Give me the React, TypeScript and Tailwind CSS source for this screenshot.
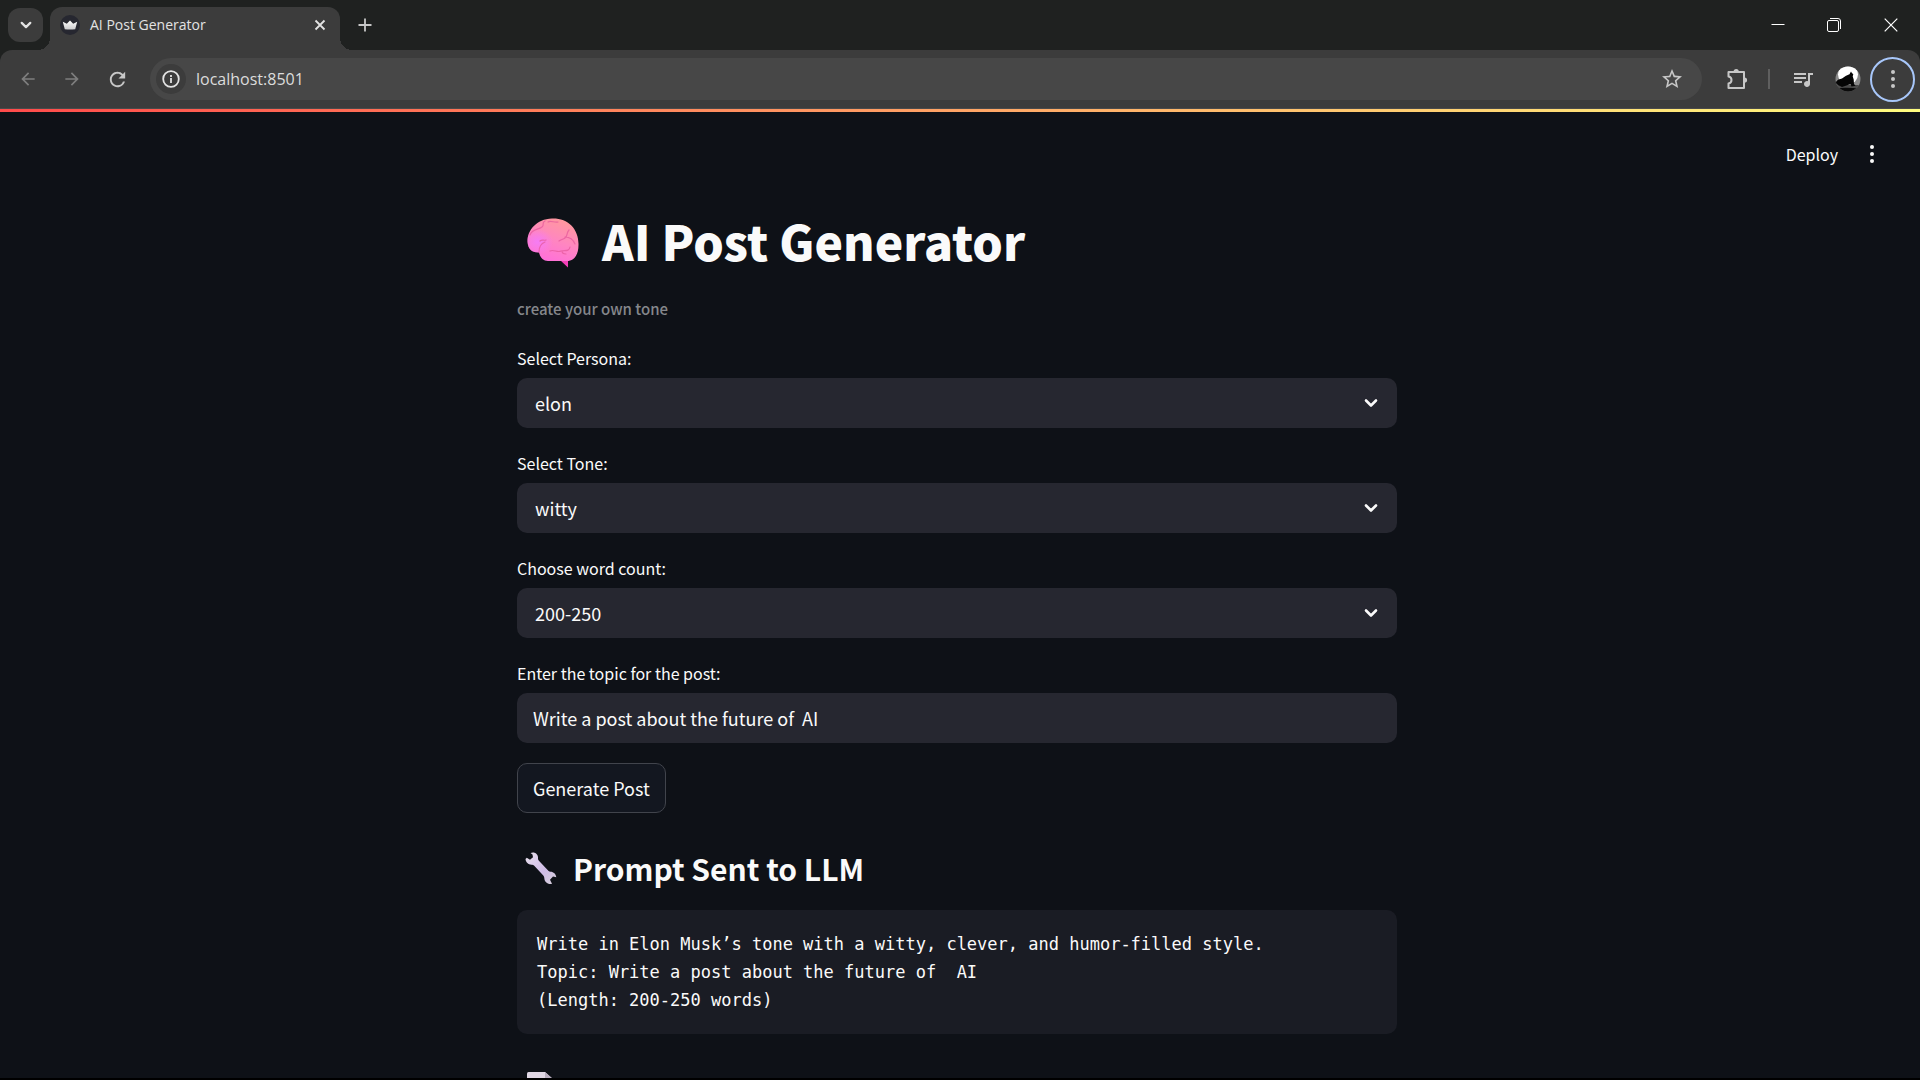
import React, { useState } from 'react';
import {
  MdArrowBack,
  MdArrowForward,
  MdQueueMusic,
  MdRefresh,
  MdStarBorder,
} from 'react-icons/md';

const prompt = `Write in Elon Musk’s tone with a witty, clever, and humor-filled style.
Topic: Write a post about the future of  AI
(Length: 200-250 words)`;

function Chevron({ className }: { className: string }) {
  return (
    <svg viewBox="0 0 14 9" className={className} fill="none" stroke="currentColor" strokeWidth="2.6" strokeLinecap="round" strokeLinejoin="round" aria-hidden="true">
      <path d="M2 2l5 5 5-5" />
    </svg>
  );
}

function Dots({ className }: { className: string }) {
  return (
    <svg viewBox="0 0 4 18" className={className} fill="currentColor" aria-hidden="true">
      <circle cx="2" cy="2.1" r="2" />
      <circle cx="2" cy="9" r="2" />
      <circle cx="2" cy="15.9" r="2" />
    </svg>
  );
}

function Crown() {
  return (
    <svg viewBox="0 0 20 20" className="size-5 shrink-0" aria-hidden="true">
      <defs>
        <linearGradient id="crown" x1="0" y1="0" x2="0" y2="1">
          <stop offset="0" stopColor="#ffffff" />
          <stop offset="1" stopColor="#c9c9cc" />
        </linearGradient>
      </defs>
      <circle cx="10" cy="10" r="10" fill="#262730" />
      <path d="M2.800 6.800l4 2L10 5.400l3.200 3.400 4-2-2 7.400q-5.200.8-10.400 0z" fill="url(#crown)" />
    </svg>
  );
}

function Puzzle() {
  return (
    <svg viewBox="0 0 22 22" className="size-[22px]" fill="none" stroke="currentColor" strokeWidth="2" strokeLinejoin="round" aria-hidden="true">
      <path d="M2.500 4H18v16H2.500v-4.500q3-.6 3-3.500t-3-3.500z" />
      <path d="M7.600 3.500a2.600 2.600 0 0 1 5.200 0zM18.500 9.400a2.600 2.600 0 0 1 0 5.200z" fill="currentColor" stroke="none" />
    </svg>
  );
}

function Avatar() {
  return (
    <svg viewBox="0 0 26 26" className="size-[26px]" aria-hidden="true">
      <defs>
        <clipPath id="round">
          <circle cx="13" cy="13" r="12.500" />
        </clipPath>
      </defs>
      <g clipPath="url(#round)">
        <rect width="26" height="26" fill="#8a8a8a" />
        <circle cx="13" cy="8.500" r="10" fill="#fff" />
        <path d="M0 19h26v7H0z" fill="#4a4a4a" />
        <path d="M0 17l3-3.200 4-1.300 4-2.800 3.500-1.500L16 5.500l1 1.800 1.300.7-.6 2.500 1 3 .3 4.500 1.500 1.800-4 .7-1-2.500-4 1.500-4.500 1.500L3 19z" fill="#050505" />
        <path d="M0 22.500q12-1.500 26 .5v3H0z" fill="#0a0a0a" />
      </g>
    </svg>
  );
}

function Brain() {
  return (
    <svg viewBox="0 0 52 50" className="mt-1.5 w-[52px] h-[50px] shrink-0" role="img" aria-label="brain">
      <defs>
        <linearGradient id="brain" x1="0.75" y1="0" x2="0.300" y2="1">
          <stop offset="0" stopColor="#ff9a9a" />
          <stop offset="0.500" stopColor="#ff86c0" />
          <stop offset="1" stopColor="#ff6edb" />
        </linearGradient>
        <radialGradient id="lobe" cx="0.200" cy="0.550" r="0.300">
          <stop offset="0" stopColor="#f57cf5" />
          <stop offset="1" stopColor="#f57cf5" stopOpacity="0" />
        </radialGradient>
      </defs>
      <path d="M33 42l8 7.500V41z" fill="#f53fb8" />
      <path d="M0.500 24C0 13 9 1 25 0.500 41 0 52 11 51.500 27 51.500 37 47 43 40 43H21c-5 0-8-4-9-8.500C5 35 1 31 .5 24z" fill="url(#brain)" />
      <path d="M0.500 24C0 13 9 1 25 0.500 41 0 52 11 51.500 27 51.500 37 47 43 40 43H21c-5 0-8-4-9-8.500C5 35 1 31 .5 24z" fill="url(#lobe)" />
      <g fill="none" stroke="#e65a9c" strokeOpacity="0.750" strokeWidth="1.200" strokeLinecap="round">
        <path d="M3 17c2-6 8-5 12-8 3-2-1-4 3-6" />
        <path d="M21 4c3-2 6 1 10 0" />
        <path d="M42 12c-3 3-1 6-4 8-2 1.500-4 1.500-6 3M38 19c4 0 8 2 10 7" />
        <path d="M12 34c0-4 1-8 6-10M13 23c2-2 4 0 6-1" />
        <path d="M23 33c4-2 7 2 11 0 4-1 8 1 9-4M35 33c0 3 2 3 4 3" />
      </g>
    </svg>
  );
}

function Wrench() {
  return (
    <svg viewBox="0 0 32 33" className="w-8 h-[33px] shrink-0" role="img" aria-label="wrench">
      <defs>
        <linearGradient id="steel" x1="0" y1="0" x2="1" y2="1">
          <stop offset="0" stopColor="#e6e1e8" />
          <stop offset="0.300" stopColor="#dccdec" />
          <stop offset="0.600" stopColor="#cfbce6" />
          <stop offset="1" stopColor="#d6d0da" />
        </linearGradient>
      </defs>
      <path
        d="M5.500 1C9.500-.8 13.500 2 13 6.300q-.1 1.500.9 2.500l9.700 10.200q.8.800 2 .8c3 0 5.200 2.300 5.700 5.500l-3.300-.8-3 3.200 2 4c-3.900 1-7.600-1.600-7.700-5.800q0-1.500-1-2.500L9 13.500q-.9-.9-2.200-.8C3.500 12.900.800 10.300.5 7l1.300-1.200L5 7.800 8 5.200 7.500 2.500z"
        fill="url(#steel)"
      />
    </svg>
  );
}

function Page() {
  return (
    <svg viewBox="0 0 30 34" className="w-[30px] h-[34px] shrink-0" role="img" aria-label="page">
      <path d="M0 1.500Q0 0 1.500 0H18l9 8v24H0z" fill="#e1d8e5" />
      <path d="M18 0l9 8h-9z" fill="#b9aebf" />
    </svg>
  );
}

function SelectField({ id, label, options }: { id: string; label: string; options: string[] }) {
  return (
    <div className="flex flex-col gap-[5px]">
      <label htmlFor={id} className="text-base leading-[30px]">{label}</label>
      <div className="relative">
        <select id={id} className="block w-full h-[50px] appearance-none rounded-[10px] bg-[#262730] px-[18px] text-lg leading-7 outline-none">
          {options.map((o) => (
            <option key={o}>{o}</option>
          ))}
        </select>
        <Chevron className="pointer-events-none absolute right-[19px] top-1/2 w-[14px] h-[9px] -translate-y-1/2" />
      </div>
    </div>
  );
}

function BrowserChrome() {
  return (
    <div className="shrink-0 bg-[#1f2120] font-['Open_Sans',sans-serif] text-[#e3e3e3]">
      <div className="flex h-[50px] items-center pl-2">
        <button aria-label="Search tabs" className="grid h-[34px] w-[35px] place-items-center rounded-xl bg-[#3c3c3c]">
          <Chevron className="w-3 h-2" />
        </button>
        <div className="relative ml-[7px] mt-[7px] flex h-[43px] w-[290px] items-center rounded-t-xl bg-[#3c3c3c] pb-[7px] pl-[10px] pr-3">
          <span className="absolute -left-3 bottom-0 size-3 bg-[radial-gradient(circle_at_0_0,transparent_12px,#3c3c3c_12px)]" />
          <span className="absolute -right-3 bottom-0 size-3 bg-[radial-gradient(circle_at_100%_0,transparent_12px,#3c3c3c_12px)]" />
          <Crown />
          <span className="ml-[10px] flex-1 text-sm leading-5">AI Post Generator</span>
          <button aria-label="Close tab" className="grid size-4 place-items-center">
            <svg viewBox="0 0 12 12" className="size-3" stroke="currentColor" strokeWidth="1.800" aria-hidden="true">
              <path d="M1.500 1.500l9 9M10.500 1.500l-9 9" />
            </svg>
          </button>
        </div>
        <button aria-label="New tab" className="ml-[17px] grid size-4 place-items-center text-[#c7c7c7]">
          <svg viewBox="0 0 14 14" className="size-[14px]" stroke="currentColor" strokeWidth="1.800" aria-hidden="true">
            <path d="M7 0.500v13M0.500 7h13" />
          </svg>
        </button>
        <div className="ml-auto flex items-center text-white">
          <button aria-label="Minimize" className="grid h-10 w-14 place-items-center">
            <svg viewBox="0 0 14 14" className="size-[14px]" stroke="currentColor" aria-hidden="true">
              <path d="M0.500 6.500h13" />
            </svg>
          </button>
          <button aria-label="Restore" className="grid h-10 w-14 place-items-center">
            <svg viewBox="0 0 14 14" className="size-[14px]" fill="none" stroke="currentColor" aria-hidden="true">
              <rect x="0.500" y="2.500" width="11" height="11" rx="1.500" />
              <path d="M3 .5h8q2.500 0 2.500 2.500v8" />
            </svg>
          </button>
          <button aria-label="Close window" className="grid h-10 w-[58px] place-items-center">
            <svg viewBox="0 0 14 14" className="size-[14px]" stroke="currentColor" strokeWidth="1.200" aria-hidden="true">
              <path d="M.7.7l12.600 12.600M13.300.7L.7 13.300" />
            </svg>
          </button>
        </div>
      </div>
      <div className="flex h-[59px] items-center rounded-t-xl border-b border-[#4a4a4a] bg-[#3c3c3c] pl-[18px] pr-[5px] text-[#c7c7c7]">
        <button aria-label="Back" className="text-[#7d7d7d]"><MdArrowBack className="size-5" /></button>
        <button aria-label="Forward" className="ml-6 text-[#7d7d7d]"><MdArrowForward className="size-5" /></button>
        <button aria-label="Reload" className="ml-6"><MdRefresh className="size-[23px]" /></button>
        <div className="ml-[21px] flex h-[42px] flex-1 items-center rounded-full bg-[#474747] pl-[6px] pr-[18px]">
          <button aria-label="Site information" className="grid size-[30px] place-items-center rounded-full bg-[#3c3c3c] text-[#e3e3e3]">
            <svg viewBox="0 0 18 18" className="size-[18px]" fill="none" stroke="currentColor" strokeWidth="1.800" aria-hidden="true">
              <circle cx="9" cy="9" r="7.800" />
              <path d="M9 8v5M9 5v2" />
            </svg>
          </button>
          <input aria-label="Address" defaultValue="localhost:8501" className="ml-[10px] min-w-0 flex-1 bg-transparent text-base leading-6 text-[#dcdcdc] outline-none" />
          <button aria-label="Bookmark"><MdStarBorder className="size-6" /></button>
        </div>
        <button aria-label="Extensions" className="ml-6"><Puzzle /></button>
        <span className="ml-5 h-5 w-[2px] bg-[#5f5f5f]" />
        <button aria-label="Media" className="ml-[21px]"><MdQueueMusic className="size-6" /></button>
        <button aria-label="Profile" className="ml-5"><Avatar /></button>
        <button aria-label="Menu" className="ml-[9px] grid size-[45px] place-items-center rounded-full border-2 border-[#a8c7fa]">
          <Dots className="h-[18px] w-1" />
        </button>
      </div>
    </div>
  );
}

export default function App() {
  const [topic, setTopic] = useState('Write a post about the future of  AI');
  return (
    <div className="flex h-screen flex-col overflow-hidden bg-[#0e1117]">
      <BrowserChrome />
      <div className="h-[3px] shrink-0 bg-[linear-gradient(90deg,#ff4b4b,#fffd80)]" />
      <div className="min-h-0 flex-1 overflow-hidden pr-[6px] font-['Noto_Sans_CJK_SC',sans-serif] text-[#fafafa]">
        <header className="flex h-[84px] items-center justify-end gap-8 pr-10">
          <button className="text-base leading-6">Deploy</button>
          <button aria-label="Main menu"><Dots className="h-[18px] w-1" /></button>
        </header>
        <main className="mx-auto flex w-full max-w-[920px] flex-col px-5">
          <h1 className="mt-2.5 flex items-center gap-[23px] pl-[10px] text-5xl font-black leading-[68px]">
            <Brain />
            AI Post Generator
          </h1>
          <p className="mt-[21px] text-[15px] font-medium leading-7 text-[#85878b]">create your own tone</p>
          <form className="mt-5 flex flex-col gap-5" onSubmit={(e) => e.preventDefault()}>
            <SelectField id="persona" label="Select Persona:" options={['elon']} />
            <SelectField id="tone" label="Select Tone:" options={['witty']} />
            <SelectField id="count" label="Choose word count:" options={['200-250']} />
            <div className="flex flex-col gap-[5px]">
              <label htmlFor="topic" className="text-base leading-[30px]">Enter the topic for the post:</label>
              <input
                id="topic"
                value={topic}
                onChange={(e) => setTopic(e.target.value)}
                className="h-[50px] w-full rounded-[10px] bg-[#262730] px-4 text-lg leading-7 outline-none"
              />
            </div>
            <button className="h-[50px] self-start rounded-[10px] border border-[#41444c] bg-[#131720] px-[15px] text-lg leading-7">
              Generate Post
            </button>
          </form>
          <h2 className="mt-[34px] flex items-center gap-4 pl-2 text-3xl font-bold leading-[42px]">
            <Wrench />
            Prompt Sent to LLM
          </h2>
          <pre className="mt-[21px] rounded-[10px] bg-[#1a1c24] p-5 font-['DejaVu_Sans_Mono',monospace] text-[17px] leading-7">
            {prompt}
          </pre>
          <h2 className="mt-[34px] flex items-center gap-4 pl-[10px] text-3xl font-bold leading-[42px]">
            <Page />
            Generated Post
          </h2>
        </main>
      </div>
      <div className="h-[2px] shrink-0 bg-black" />
    </div>
  );
}
